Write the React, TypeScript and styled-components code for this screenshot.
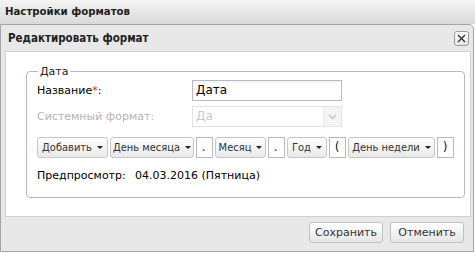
import React from 'react';
import styled, { createGlobalStyle } from 'styled-components';

const GlobalStyle = createGlobalStyle`
  body {
    margin: 0;
    background: #ffffff;
    font-family: "DejaVu Sans", Tahoma, sans-serif;
    font-size: 11px;
    color: #000;
  }
`;

const Page = styled.div`
  width: 475px;
  height: 253px;
  overflow: hidden;
  white-space: nowrap;
`;

const TopBar = styled.div`
  height: 24px;
  line-height: 24px;
  padding-left: 5px;
  font-family: "DejaVu Sans Condensed", "DejaVu Sans", sans-serif;
  font-weight: bold;
  font-size: 11.3px;
  color: #1e1e1e;
  background: linear-gradient(#f4f4f4, #dadada);
`;

const Window = styled.div`
  box-sizing: border-box;
  width: 474px;
  height: 228px;
  border: 1px solid #a4a4a4;
  border-top-right-radius: 5px;
  background: #e8e8e8;
  display: flex;
  flex-direction: column;
`;

const WindowHeader = styled.div`
  height: 26px;
  display: flex;
  align-items: center;
  justify-content: space-between;
  padding: 0 4px 0 7px;
  font-family: "DejaVu Sans Condensed", "DejaVu Sans", sans-serif;
  font-weight: bold;
  font-size: 11.5px;
  color: #1e1e1e;
`;

const CloseButton = styled.div`
  box-sizing: border-box;
  width: 15px;
  height: 15px;
  border: 1px solid #9a9a9a;
  border-radius: 3px;
  background: linear-gradient(#ffffff, #e6e6e6);
  display: flex;
  align-items: center;
  justify-content: center;
`;

const Body = styled.div`
  box-sizing: border-box;
  height: 166px;
  margin: 0 2px 0 4px;
  border: 1px solid #cfcfcf;
  background: #fff;
  padding: 13px 9px 0 20px;
`;

const FieldSet = styled.fieldset`
  margin: 0;
  padding: 0 10px 0 10px;
  height: 133px;
  box-sizing: border-box;
  border: 1px solid #b5b8c8;
  border-radius: 4px;
`;

const Legend = styled.legend`
  padding: 0 2px;
  margin-left: 1px;
  color: #222;
`;

const FormRow = styled.div`
  display: grid;
  grid-template-columns: 155px 150px;
  align-items: center;
  height: 27px;
  margin-top: -1px;
`;

const Label = styled.span<{ disabled?: boolean }>`
  color: ${(p) => (p.disabled ? '#b4b4b4' : '#000')};
`;

const Star = styled.span`
  color: #e0191b;
`;

const TextField = styled.div`
  box-sizing: border-box;
  height: 21px;
  border: 1px solid #b5b8c8;
  background: linear-gradient(#f2f2f2 0, #fff 3px);
  padding-left: 3px;
  line-height: 19px;
  font-size: 12px;
`;

const SelectField = styled.div`
  box-sizing: border-box;
  height: 21px;
  border: 1px solid #e4e4e4;
  display: flex;
  color: #c8c8c8;
  font-size: 12px;
  line-height: 19px;
`;

const SelectText = styled.div`
  flex: 1;
  padding-left: 3px;
`;

const SelectTrigger = styled.div`
  width: 17px;
  border-left: 1px solid #ececec;
  background: #f4f4f4;
  display: flex;
  align-items: center;
  justify-content: center;
`;

const TokenRow = styled.div`
  display: flex;
  align-items: center;
  gap: 2px;
  margin-top: 7px;
  height: 21px;
  font-family: "DejaVu Sans Condensed", "DejaVu Sans", sans-serif;
`;

const DropButton = styled.div<{ w: number }>`
  box-sizing: border-box;
  width: ${(p) => p.w}px;
  height: 21px;
  border: 1px solid #c6c6c6;
  border-radius: 3px;
  background: linear-gradient(#ffffff, #e9e9e9);
  display: flex;
  align-items: center;
  justify-content: center;
  gap: 5px;
  color: #333;
`;

const Caret = styled.span`
  width: 0;
  height: 0;
  border-left: 3px solid transparent;
  border-right: 3px solid transparent;
  border-top: 3px solid #222;
`;

const SepBox = styled.div`
  box-sizing: border-box;
  width: 17px;
  height: 21px;
  border: 1px solid #b5b8c8;
  background: #fff;
  padding-left: 5px;
  line-height: 19px;
  font-size: 12px;
`;

const Preview = styled.div`
  display: flex;
  margin-top: 11px;
  line-height: 14px;
`;

const PreviewLabel = styled.span`
  width: 98px;
`;

const Footer = styled.div`
  flex: 1;
  display: flex;
  justify-content: flex-end;
  align-items: flex-start;
  gap: 7px;
  padding: 5px 9px 0 0;
`;

const FooterButton = styled.div`
  box-sizing: border-box;
  width: 74px;
  height: 21px;
  border: 1px solid #c2c2c2;
  border-radius: 3px;
  background: linear-gradient(#ffffff, #e6e6e6);
  display: flex;
  align-items: center;
  justify-content: center;
  color: #333;
`;

const tokens: { kind: 'drop' | 'sep'; text: string; w?: number }[] = [
  { kind: 'drop', text: 'Добавить', w: 71 },
  { kind: 'drop', text: 'День месяца', w: 84 },
  { kind: 'sep', text: '.' },
  { kind: 'drop', text: 'Месяц', w: 51 },
  { kind: 'sep', text: '.' },
  { kind: 'drop', text: 'Год', w: 40 },
  { kind: 'sep', text: '(' },
  { kind: 'drop', text: 'День недели', w: 87 },
  { kind: 'sep', text: ')' },
];

export default function App() {
  return (
    <Page>
      <GlobalStyle />
      <TopBar>Настройки форматов</TopBar>
      <Window>
        <WindowHeader>
          <span>Редактировать формат</span>
          <CloseButton>
            <svg width="9" height="9" viewBox="0 0 9 9">
              <path d="M1 1L8 8M8 1L1 8" stroke="#333" strokeWidth="1.4" />
            </svg>
          </CloseButton>
        </WindowHeader>
        <Body>
          <FieldSet>
            <Legend>Дата</Legend>
            <FormRow>
              <Label>
                Название<Star>*</Star>:
              </Label>
              <TextField>Дата</TextField>
            </FormRow>
            <FormRow>
              <Label disabled>Системный формат:</Label>
              <SelectField>
                <SelectText>Да</SelectText>
                <SelectTrigger>
                  <svg width="9" height="6" viewBox="0 0 9 6">
                    <path d="M1 1L4.5 4.5L8 1" stroke="#c4c4c4" strokeWidth="1.5" fill="none" />
                  </svg>
                </SelectTrigger>
              </SelectField>
            </FormRow>
            <TokenRow>
              {tokens.map((t, i) =>
                t.kind === 'drop' ? (
                  <DropButton key={i} w={t.w || 60}>
                    {t.text}
                    <Caret />
                  </DropButton>
                ) : (
                  <SepBox key={i}>{t.text}</SepBox>
                )
              )}
            </TokenRow>
            <Preview>
              <PreviewLabel>Предпросмотр:</PreviewLabel>
              <span>04.03.2016 (Пятница)</span>
            </Preview>
          </FieldSet>
        </Body>
        <Footer>
          <FooterButton>Сохранить</FooterButton>
          <FooterButton>Отменить</FooterButton>
        </Footer>
      </Window>
    </Page>
  );
}
